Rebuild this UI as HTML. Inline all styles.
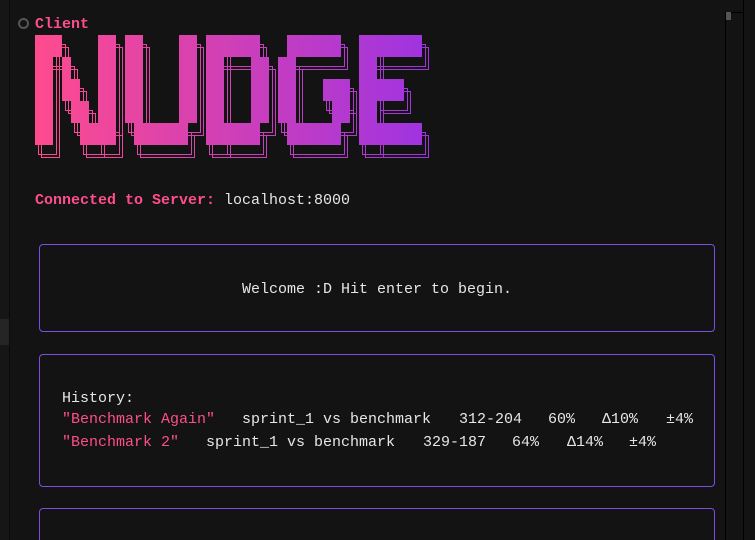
<!DOCTYPE html>
<html style="overflow:hidden;height:540px"><head><style>
body{margin:0;width:755px;height:540px;background:#131313;overflow:hidden;position:relative;font-family:"Liberation Mono",monospace;font-size:15px;color:#e6e6e6}
.a{position:absolute;white-space:pre;line-height:18px}
.p{color:#ff4d8d}
.box{position:absolute;left:39px;width:674px;border:1px solid #7c4ee6;border-radius:4px}
</style></head><body>
<div style="position:absolute;left:0;top:0;width:9px;height:540px;background:#161616"></div>
<div style="position:absolute;left:0;top:319px;width:9px;height:26px;background:#252525"></div>
<div style="position:absolute;left:9px;top:0;width:1px;height:540px;background:#0a0a0a"></div>
<div style="position:absolute;left:725px;top:12px;width:1px;height:528px;background:#000"></div>
<div style="position:absolute;left:743px;top:0;width:1px;height:540px;background:#000"></div>
<div style="position:absolute;left:726px;top:12px;width:17px;height:1px;background:#000"></div>
<div style="position:absolute;left:726px;top:12px;width:5px;height:8px;background:#555"></div>
<div style="position:absolute;left:18px;top:18px;width:7px;height:7px;border:2px solid #555;border-radius:50%"></div>
<div class="a p" style="left:35px;top:16px;font-weight:bold">Client</div>
<svg style="position:absolute;left:0;top:0" width="460" height="170">
<defs><linearGradient id="g" x1="35" x2="422" y1="0" y2="0" gradientUnits="userSpaceOnUse"><stop offset="0" stop-color="#ff4b8e"/><stop offset="1" stop-color="#a034e0"/></linearGradient>
<g id="L">
<rect x="35" y="35" width="18" height="110"/><rect x="35" y="35" width="27" height="22"/><rect x="62" y="57" width="9" height="22"/><rect x="62" y="79" width="18" height="22"/><rect x="71" y="101" width="18" height="22"/><rect x="80" y="123" width="36" height="22"/><rect x="98" y="35" width="18" height="110"/>
<rect x="125" y="35" width="18" height="88"/><rect x="179" y="35" width="18" height="88"/><rect x="134" y="123" width="54" height="22"/>
<rect x="206" y="35" width="54" height="22"/><rect x="206" y="35" width="18" height="110"/><rect x="251" y="57" width="18" height="66"/><rect x="206" y="123" width="54" height="22"/>
<rect x="287" y="35" width="54" height="22"/><rect x="278" y="57" width="18" height="66"/><rect x="287" y="123" width="54" height="22"/><rect x="332" y="79" width="18" height="44"/><rect x="323" y="79" width="27" height="22"/>
<rect x="359" y="35" width="63" height="22"/><rect x="359" y="35" width="18" height="110"/><rect x="377" y="79" width="27" height="22"/><rect x="359" y="123" width="63" height="22"/>
</g></defs>
<g fill="none" stroke="url(#g)" stroke-width="1">
<use href="#L" transform="translate(6.5,12.5)"/>
<use href="#L" transform="translate(3.5,9.5)"/>
</g>
<use href="#L" fill="url(#g)"/>
</svg>
<div class="a" style="left:35px;top:192px"><span class="p" style="font-weight:bold">Connected to Server:</span> localhost:8000</div>
<div class="box" style="top:244px;height:86px"></div>
<div class="a" style="left:242px;top:281px">Welcome :D Hit enter to begin.</div>
<div class="box" style="top:354px;height:131px"></div>
<div class="a" style="left:62px;top:390px">History:</div>
<div class="a p" style="left:62px;top:411px">"Benchmark Again"</div>
<div class="a" style="left:242px;top:411px">sprint_1 vs benchmark</div>
<div class="a" style="left:459px;top:411px">312-204</div>
<div class="a" style="left:548px;top:411px">60%</div>
<div class="a" style="left:602px;top:411px">Δ10%</div>
<div class="a" style="left:666px;top:411px">±4%</div>
<div class="a p" style="left:62px;top:434px">"Benchmark 2"</div>
<div class="a" style="left:206px;top:434px">sprint_1 vs benchmark</div>
<div class="a" style="left:423px;top:434px">329-187</div>
<div class="a" style="left:512px;top:434px">64%</div>
<div class="a" style="left:567px;top:434px">Δ14%</div>
<div class="a" style="left:629px;top:434px">±4%</div>
<div class="box" style="top:508px;height:40px"></div>
</body></html>
